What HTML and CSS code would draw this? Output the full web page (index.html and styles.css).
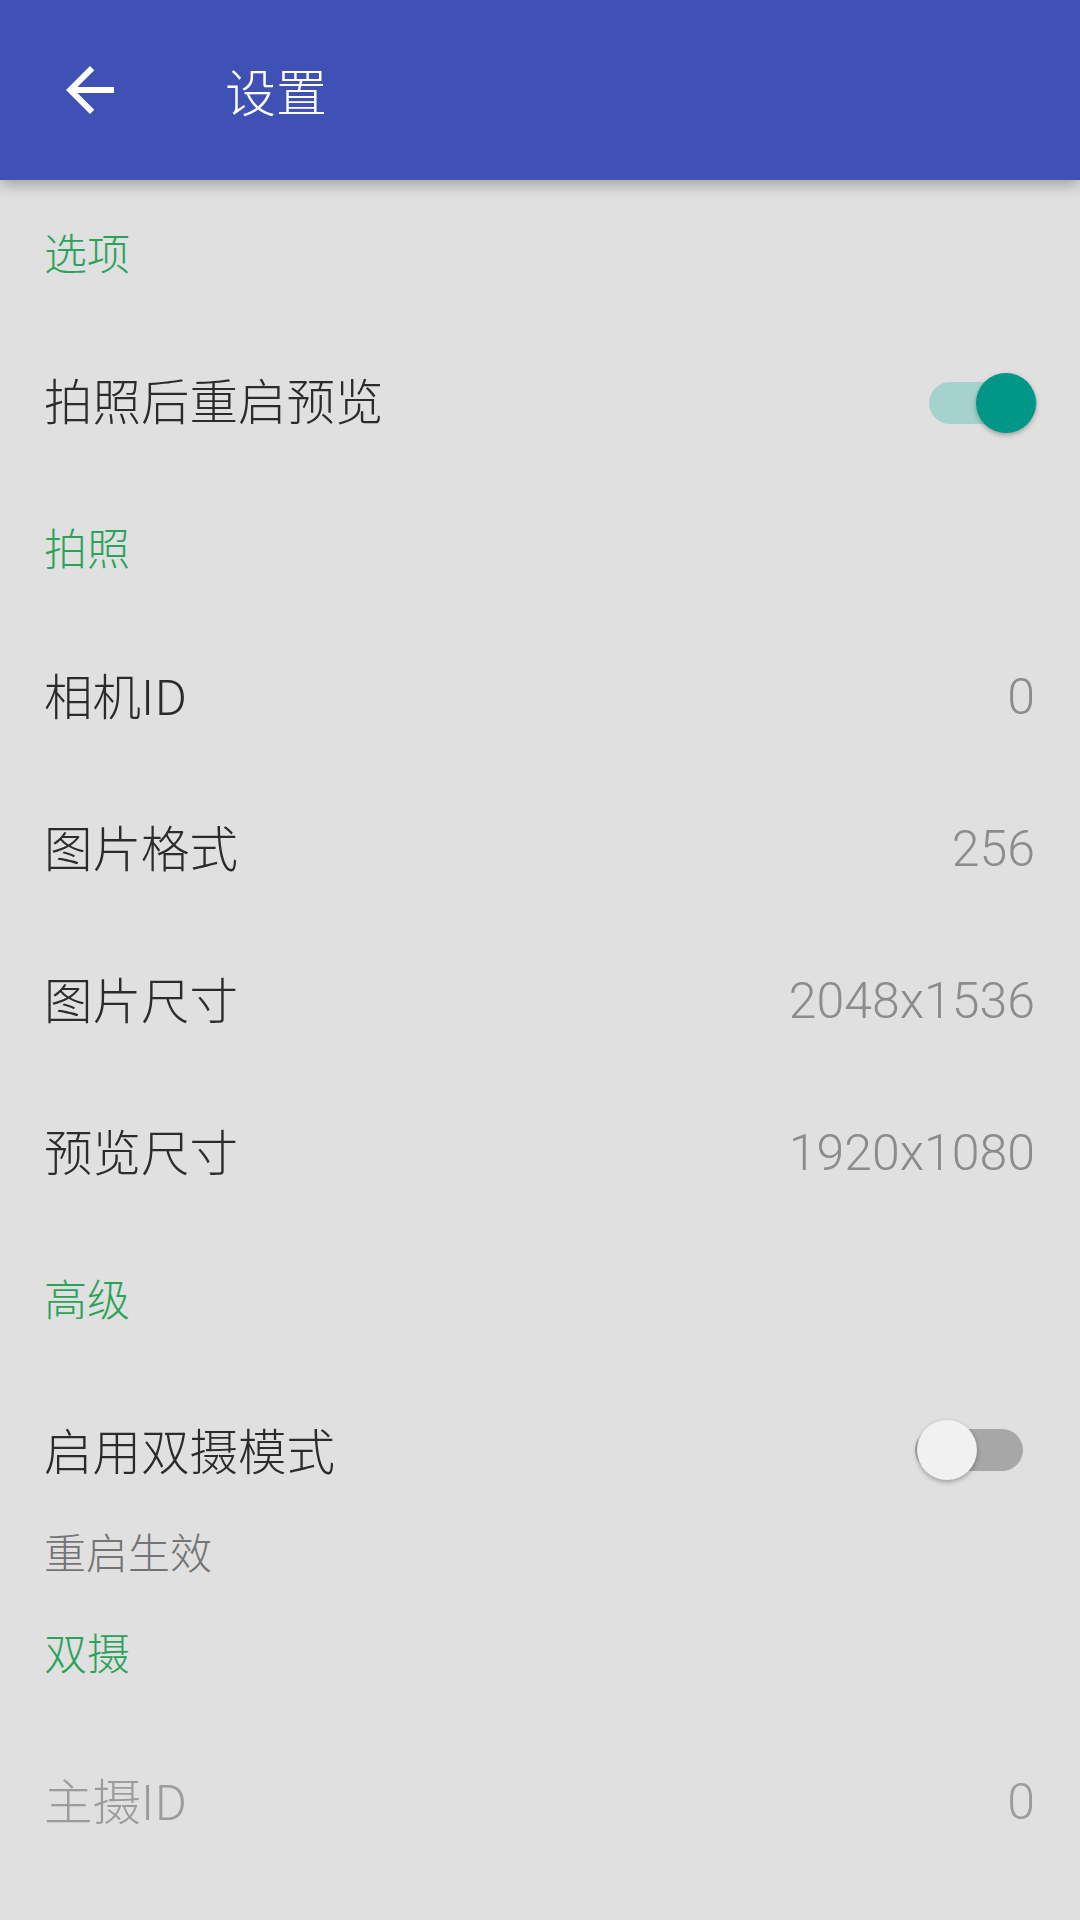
FILE: index.html
```html
<!DOCTYPE html>
<html lang="zh-CN">
<head>
<meta charset="utf-8">
<title>设置</title>
<link rel="stylesheet" href="styles.css">
</head>
<body>
<div class="screen">
  <header class="appbar">
    <svg class="back" viewBox="0 0 24 24" aria-hidden="true"><path d="M20 11H7.83l5.59-5.59L12 4l-8 8 8 8 1.41-1.41L7.83 13H20v-2z" fill="#ffffff"/></svg>
    <h1 class="title">设置</h1>
  </header>
  <main class="list">
    <div class="cat">选项</div>
    <div class="item">
      <span class="label">拍照后重启预览</span>
      <span class="switch switch-on"><span class="track"></span><span class="thumb"></span></span>
    </div>

    <div class="cat">拍照</div>
    <div class="item"><span class="label">相机ID</span><span class="value">0</span></div>
    <div class="item"><span class="label">图片格式</span><span class="value">256</span></div>
    <div class="item"><span class="label">图片尺寸</span><span class="value">2048x1536</span></div>
    <div class="item"><span class="label">预览尺寸</span><span class="value">1920x1080</span></div>

    <div class="cat">高级</div>
    <div class="item item-two">
      <div class="texts">
        <span class="label">启用双摄模式</span>
        <span class="summary">重启生效</span>
      </div>
      <span class="switch switch-off"><span class="track"></span><span class="thumb"></span></span>
    </div>

    <div class="cat">双摄</div>
    <div class="item item-disabled"><span class="label">主摄ID</span><span class="value">0</span></div>
  </main>
</div>
</body>
</html>
```
FILE: styles.css
```css
html, body {
  margin: 0;
  padding: 0;
}
body {
  background: #e0e0e0;
  font-family: "Noto Sans CJK SC", "Liberation Sans", sans-serif;
  font-weight: 300;
}
.screen {
  width: 1080px;
  height: 1920px;
  overflow: hidden;
  background: #e0e0e0;
}
.appbar {
  position: relative;
  z-index: 1;
  height: 180px;
  background: #3f51b5;
  display: flex;
  align-items: center;
  box-shadow: 0 5px 14px rgba(0, 0, 0, 0.28);
}
.back {
  width: 72px;
  height: 72px;
  margin-left: 54px;
  flex: none;
}
.title {
  margin: 0 0 0 99px;
  font-size: 51px;
  font-weight: 300;
  line-height: 60px;
  color: #ffffff;
}
.list {
  display: flex;
  flex-direction: column;
}
.cat {
  height: 143px;
  display: flex;
  align-items: center;
  padding-left: 44px;
  font-size: 43px;
  line-height: 1;
  color: #2aa35a;
}
.item {
  height: 152px;
  display: flex;
  align-items: center;
  justify-content: space-between;
  padding: 0 45px 0 44px;
}
.label {
  font-size: 48.5px;
  line-height: 1;
  color: #2b2b2b;
}
.value {
  padding-top: 5px;
  font-family: Roboto, "Liberation Sans", sans-serif;
  font-weight: 300;
  font-size: 50px;
  line-height: 1;
  color: #8c8c8c;
}
.item-two {
  height: auto;
  align-items: flex-start;
  padding-top: 48px;
}
.texts {
  display: flex;
  flex-direction: column;
}
.item-two .label {
  line-height: 64px;
}
.summary {
  margin-top: 41px;
  font-size: 42px;
  line-height: 58px;
  color: #747474;
}
.item-disabled .label,
.item-disabled .value {
  color: #9c9c9c;
}
.switch {
  position: relative;
  width: 108px;
  height: 60px;
  display: flex;
  align-items: center;
  flex: none;
}
.switch-on {
  margin-right: -2px;
  margin-top: 8px;
}
.switch-off {
  margin-right: 12px;
  margin-top: 3px;
}
.track {
  width: 108px;
  height: 42px;
  border-radius: 21px;
}
.thumb {
  position: absolute;
  top: 0;
  width: 60px;
  height: 60px;
  border-radius: 50%;
  box-shadow: 0 2px 5px rgba(0, 0, 0, 0.3);
}
.switch-on .track {
  background: #a6d2cd;
}
.switch-on .thumb {
  right: 1px;
  background: #009688;
}
.switch-off .track {
  background: #a7a7a7;
}
.switch-off .thumb {
  left: 2px;
  background: #f1f1f1;
}
```
